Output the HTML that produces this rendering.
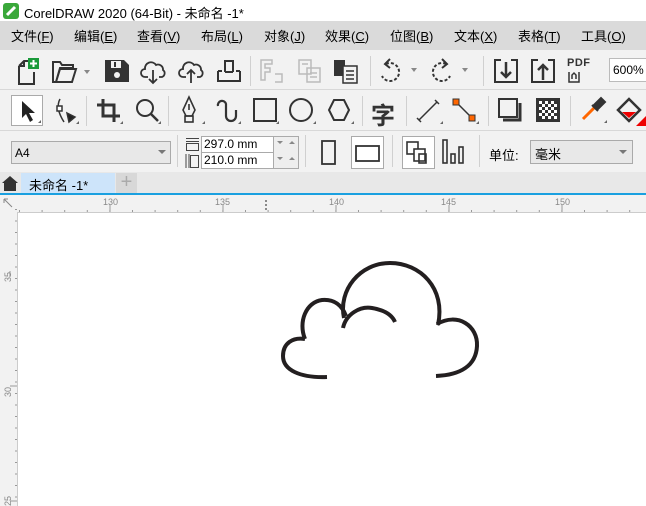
<!DOCTYPE html>
<html><head><meta charset="utf-8"><style>
*{margin:0;padding:0;box-sizing:border-box}
body{width:646px;height:506px;overflow:hidden;background:#fff;font-family:"Liberation Sans","Noto Sans CJK SC",sans-serif;position:relative}
.abs{position:absolute}
.t{font-size:13px;color:#000}
.menu span{position:absolute;top:5px;font-size:13px}
.bar{position:absolute;left:0;width:646px;background:#f2f2f2}
svg{position:absolute;overflow:visible}
.sep{position:absolute;width:1px;background:#d0d0d0}
</style></head><body>
<!-- title -->
<div class="abs" style="left:0;top:0;width:646px;height:21px;background:#fff"></div>
<svg style="left:3px;top:3px" width="16" height="16"><rect x="0" y="0" width="16" height="16" rx="3" fill="#3aa83a"/><path d="M4 12 L12 4" stroke="#fff" stroke-width="3"/></svg>
<div class="abs t" style="left:24px;top:3px;font-size:13px">CorelDRAW 2020 (64-Bit) - 未命名 -1*</div>
<!-- menu -->
<div class="abs menu" style="left:0;top:21px;width:646px;height:29px;background:#dadada">
<span style="left:11px">文件(<u>F</u>)</span><span style="left:74px">编辑(<u>E</u>)</span><span style="left:137px">查看(<u>V</u>)</span><span style="left:201px">布局(<u>L</u>)</span><span style="left:264px">对象(<u>J</u>)</span><span style="left:325px">效果(<u>C</u>)</span><span style="left:390px">位图(<u>B</u>)</span><span style="left:454px">文本(<u>X</u>)</span><span style="left:518px">表格(<u>T</u>)</span><span style="left:581px">工具(<u>O</u>)</span>
</div>
<div class="bar" style="top:50px;height:122px"></div>
<div class="abs" style="left:0;top:89px;width:646px;height:1px;background:#d8d8d8"></div>
<div class="abs" style="left:0;top:130px;width:646px;height:1px;background:#d8d8d8"></div>
<!-- toolbar1 icons -->
<svg style="left:14px;top:58px" width="30" height="28" fill="none" stroke="#333" stroke-width="2"><path d="M5 8 L10 3 H16 M5 8 V26 H20 V14 M5 8 H10 V3"/><rect x="14" y="0" width="11" height="11" fill="#1a9a3a" stroke="none"/><path d="M19.5 2 V9 M16 5.5 H23" stroke="#fff"/></svg>
<svg style="left:52px;top:60px" width="40" height="24"><path d="M1 2 H8 L10 5 H21 V8 H8 L4 22 H1 Z M4 22 L8 9 H24 L20 22 Z" fill="none" stroke="#333" stroke-width="2"/><path d="M32 10 L38 10 L35 14 Z" fill="#888"/></svg>
<svg style="left:104px;top:59px" width="26" height="24"><path d="M1 1 H20 L25 6 V23 H1 Z" fill="#333"/><rect x="7" y="2" width="10" height="7" fill="#f2f2f2"/><rect x="10" y="3" width="2" height="5" fill="#333"/><circle cx="13" cy="16" r="3" fill="#f2f2f2"/></svg>
<svg style="left:141px;top:59px" width="26" height="26" fill="none" stroke="#333" stroke-width="1.8"><path d="M7 18 H4 A4 4 0 0 1 4 10 A6 6 0 0 1 15 6 A5 5 0 0 1 22 11 A4 4 0 0 1 21 18 H18"/><path d="M12 11 V24 M8 20 L12 24 L16 20"/></svg>
<svg style="left:179px;top:59px" width="26" height="26" fill="none" stroke="#333" stroke-width="1.8"><path d="M7 18 H4 A4 4 0 0 1 4 10 A6 6 0 0 1 15 6 A5 5 0 0 1 22 11 A4 4 0 0 1 21 18 H18"/><path d="M12 24 V11 M8 15 L12 11 L16 15"/></svg>
<svg style="left:216px;top:58px" width="26" height="26" fill="none" stroke="#333" stroke-width="2"><path d="M9 14 V3 H17 V14 M2 13 V23 H24 V13 M9 14 H17 M2 13 H6 M20 13 H24"/></svg>
<div class="sep" style="left:250px;top:56px;height:30px"></div>
<svg style="left:260px;top:58px" width="26" height="26" fill="none" stroke="#bbb" stroke-width="1.5"><path d="M1 2 H12 V6 H5 V10 H10 V14 H5 V22 H1 Z"/><path d="M15 16 H22 V24 H15"/></svg>
<svg style="left:298px;top:58px" width="26" height="26" fill="none" stroke="#bbb" stroke-width="1.5"><rect x="1" y="2" width="12" height="14"/><rect x="9" y="10" width="13" height="14"/><path d="M4 6 H10 M12 15 H19 M12 19 H19"/></svg>
<svg style="left:333px;top:58px" width="28" height="26"><rect x="1" y="2" width="11" height="16" fill="#333"/><rect x="10" y="8" width="14" height="17" fill="#f2f2f2" stroke="#333" stroke-width="1.5"/><path d="M13 13 H21 M13 17 H21 M13 21 H21" stroke="#333" stroke-width="1.5"/></svg>
<div class="sep" style="left:370px;top:56px;height:30px"></div>
<svg style="left:378px;top:58px" width="40" height="26" fill="none" stroke="#333" stroke-width="2"><path d="M8 6 A9 9 0 1 1 4 18" stroke-dasharray="3 2"/><path d="M12 1 L7 6 L12 10"/><path d="M33 10 L39 10 L36 14 Z" fill="#888" stroke="none"/></svg>
<svg style="left:430px;top:58px" width="40" height="26" fill="none" stroke="#333" stroke-width="2"><path d="M16 6 A9 9 0 1 0 20 18" stroke-dasharray="3 2"/><path d="M12 1 L17 6 L12 10"/><path d="M32 10 L38 10 L35 14 Z" fill="#888" stroke="none"/></svg>
<div class="sep" style="left:483px;top:56px;height:30px"></div>
<svg style="left:494px;top:59px" width="24" height="24" fill="none" stroke="#333" stroke-width="2"><path d="M7 1 H1 V23 H23 V1 H17"/><path d="M12 3 V18 M7 13 L12 18 L17 13" stroke-width="2.5"/></svg>
<svg style="left:531px;top:59px" width="24" height="24" fill="none" stroke="#333" stroke-width="2"><path d="M7 1 H1 V23 H23 V1 H17"/><path d="M12 21 V6 M7 11 L12 6 L17 11" stroke-width="2.5"/></svg>
<div class="abs" style="left:567px;top:57px;font-size:11px;color:#333;font-weight:bold;letter-spacing:0.5px">PDF</div>
<svg style="left:568px;top:71px" width="12" height="12" fill="none" stroke="#333" stroke-width="1.5"><path d="M1 1 V11 H11 V1 M4 8 V4 L6 2 L8 4 V8"/></svg>
<div class="abs" style="left:609px;top:58px;width:40px;height:24px;background:#fff;border:1px solid #bbb;font-size:12px;padding:4px 0 0 3px">600%</div>
<!-- toolbar2 -->
<div class="abs" style="left:11px;top:95px;width:32px;height:31px;background:#fff;border:1px solid #aaa"></div>
<svg style="left:18px;top:100px" width="24" height="24"><path d="M4 1 L4 18 L8 14 L12 22 L15 20 L11 13 L17 13 Z" fill="#222"/><path d="M23 20 V23 H20 Z" fill="#666"/></svg>
<svg style="left:52px;top:98px" width="28" height="28" fill="none" stroke="#333" stroke-width="1.5"><path d="M8 1 Q3 10 12 24"/><rect x="5" y="8" width="5" height="5" fill="#fff"/><path d="M15 15 L23 19 L17 24 Z" fill="#222"/><path d="M27 23 V26 H24 Z" fill="#666" stroke="none"/></svg>
<div class="sep" style="left:86px;top:96px;height:30px"></div>
<svg style="left:96px;top:98px" width="28" height="28" fill="none" stroke="#333" stroke-width="3"><path d="M7 1 V18 H24 M1 7 H18 V24"/><path d="M27 23 V26 H24 Z" fill="#666" stroke="none"/></svg>
<svg style="left:134px;top:98px" width="28" height="28" fill="none" stroke="#333" stroke-width="2"><circle cx="11" cy="10" r="8"/><path d="M17 16 L24 23" stroke-width="2.5"/><path d="M27 23 V26 H24 Z" fill="#666" stroke="none"/></svg>
<div class="sep" style="left:168px;top:96px;height:30px"></div>
<svg style="left:178px;top:96px" width="28" height="30" fill="none" stroke="#333" stroke-width="1.6"><path d="M11 1 L5 14 L8 20 H14 L17 14 Z M11 8 V14"/><rect x="7" y="20" width="8" height="6"/><path d="M27 25 V28 H24 Z" fill="#666" stroke="none"/></svg>
<svg style="left:214px;top:96px" width="28" height="30" fill="none" stroke="#333" stroke-width="2.2"><path d="M4 10 A4 4 0 0 1 12 8 V20 A5 5 0 0 0 22 20 V14"/><path d="M27 25 V28 H24 Z" fill="#666" stroke="none"/></svg>
<svg style="left:252px;top:98px" width="28" height="28" fill="none" stroke="#333" stroke-width="2"><rect x="2" y="1" width="22" height="22"/><path d="M27 23 V26 H24 Z" fill="#666" stroke="none"/></svg>
<svg style="left:289px;top:98px" width="28" height="28" fill="none" stroke="#333" stroke-width="2"><circle cx="12" cy="12" r="11"/><path d="M27 23 V26 H24 Z" fill="#666" stroke="none"/></svg>
<svg style="left:327px;top:98px" width="28" height="28" fill="none" stroke="#333" stroke-width="2"><path d="M7 2 H17 L22 12 L17 22 H7 L2 12 Z"/><path d="M27 23 V26 H24 Z" fill="#666" stroke="none"/></svg>
<div class="sep" style="left:362px;top:96px;height:30px"></div>
<div class="abs" style="left:371px;top:96px;font-size:24px;font-weight:bold;color:#333">字</div>
<div class="sep" style="left:406px;top:96px;height:30px"></div>
<svg style="left:416px;top:98px" width="28" height="28" fill="none" stroke="#333" stroke-width="1.5"><path d="M3 22 L21 4 M1 20 L5 24 M19 2 L23 6"/><path d="M27 23 V26 H24 Z" fill="#666" stroke="none"/></svg>
<svg style="left:452px;top:98px" width="28" height="28"><path d="M4 4 L20 20" stroke="#333" stroke-width="1.5"/><rect x="1" y="1" width="6" height="6" fill="#f60" stroke="#333"/><rect x="17" y="17" width="6" height="6" fill="#f60" stroke="#333"/><path d="M27 23 V26 H24 Z" fill="#666"/></svg>
<div class="sep" style="left:488px;top:96px;height:30px"></div>
<svg style="left:498px;top:98px" width="28" height="28" fill="none" stroke="#333" stroke-width="2"><rect x="1" y="1" width="18" height="18"/><path d="M22 5 V22 H5" stroke-width="3"/></svg>
<svg style="left:536px;top:98px" width="24" height="24"><rect x="0" y="0" width="24" height="24" fill="#333"/><g fill="#fff"><rect x="3" y="3" width="3" height="3"/><rect x="9" y="3" width="3" height="3"/><rect x="15" y="3" width="3" height="3"/><rect x="6" y="6" width="3" height="3"/><rect x="12" y="6" width="3" height="3"/><rect x="18" y="6" width="3" height="3"/><rect x="3" y="9" width="3" height="3"/><rect x="9" y="9" width="3" height="3"/><rect x="15" y="9" width="3" height="3"/><rect x="6" y="12" width="3" height="3"/><rect x="12" y="12" width="3" height="3"/><rect x="18" y="12" width="3" height="3"/><rect x="3" y="15" width="3" height="3"/><rect x="9" y="15" width="3" height="3"/><rect x="15" y="15" width="3" height="3"/><rect x="6" y="18" width="3" height="3"/><rect x="12" y="18" width="3" height="3"/><rect x="18" y="18" width="3" height="3"/></g></svg>
<div class="sep" style="left:570px;top:96px;height:30px"></div>
<svg style="left:580px;top:97px" width="28" height="28"><path d="M3 22 L15 10" stroke="#f60" stroke-width="3"/><path d="M14 8 L21 1 L25 5 L18 12 Z M12 8 L18 14" stroke="#333" stroke-width="2" fill="#333"/><path d="M27 23 V26 H24 Z" fill="#666"/></svg>
<svg style="left:616px;top:96px" width="30" height="30"><path d="M2 14 L13 3 L24 14 L13 25 Z" fill="none" stroke="#333" stroke-width="2.5"/><path d="M6 16 L13 22 L20 16 Z" fill="#e00"/><path d="M30 20 V30 H20 Z" fill="#e00"/></svg>
<!-- property bar -->
<div class="abs" style="left:11px;top:141px;width:160px;height:23px;background:#e8e8e8;border:1px solid #aaa;font-size:12px;padding:4px 0 0 3px">A4</div>
<svg style="left:158px;top:150px" width="8" height="5"><path d="M0 0 H8 L4 4 Z" fill="#777"/></svg>
<div class="sep" style="left:177px;top:135px;height:32px"></div>
<svg style="left:185px;top:137px" width="16" height="32" fill="none" stroke="#444" stroke-width="1"><path d="M1 1.5 H14 M1 4.5 H14"/><rect x="1.5" y="6.5" width="12" height="7"/><path d="M1 17 V31 M4 17 V31"/><rect x="5.5" y="18.5" width="8" height="12"/></svg>
<div class="abs" style="left:201px;top:136px;width:98px;height:33px;border:1px solid #aaa;background:#fff"></div>
<div class="abs" style="left:201px;top:152px;width:98px;height:1px;background:#aaa"></div>
<div class="abs" style="left:273px;top:136px;width:1px;height:33px;background:#aaa"></div>
<div class="abs" style="left:274px;top:137px;width:24px;height:31px;background:#eee"></div>
<div class="abs" style="left:204px;top:137px;font-size:12px">297.0 mm</div>
<div class="abs" style="left:204px;top:153px;font-size:12px">210.0 mm</div>
<svg style="left:277px;top:141px" width="20" height="24" fill="#888"><path d="M0 0 H6 L3 3 Z M12 3 H18 L15 0 Z M0 16 H6 L3 19 Z M12 19 H18 L15 16 Z"/></svg>
<div class="sep" style="left:305px;top:135px;height:32px"></div>
<svg style="left:321px;top:140px" width="16" height="26" fill="none" stroke="#333" stroke-width="1.8"><rect x="1" y="1" width="13" height="23"/></svg>
<div class="abs" style="left:351px;top:136px;width:33px;height:33px;background:#fff;border:1px solid #aaa"></div>
<svg style="left:355px;top:145px" width="26" height="18" fill="none" stroke="#333" stroke-width="1.8"><rect x="1" y="1" width="23" height="15"/></svg>
<div class="sep" style="left:392px;top:135px;height:32px"></div>
<div class="abs" style="left:402px;top:136px;width:33px;height:33px;background:#fff;border:1px solid #aaa"></div>
<svg style="left:406px;top:141px" width="26" height="26" fill="#fff" stroke="#333" stroke-width="1.6"><rect x="1" y="1" width="11" height="12"/><rect x="8" y="8" width="11" height="12"/><rect x="13" y="13" width="7" height="9" fill="none"/></svg>
<svg style="left:442px;top:139px" width="26" height="26" fill="none" stroke="#333" stroke-width="1.6"><rect x="1" y="1" width="4" height="23"/><rect x="9" y="15" width="4" height="9"/><rect x="17" y="8" width="4" height="16"/></svg>
<div class="sep" style="left:479px;top:135px;height:32px"></div>
<div class="abs" style="left:489px;top:145px;font-size:13px">单位:</div>
<div class="abs" style="left:530px;top:140px;width:103px;height:24px;background:#e8e8e8;border:1px solid #aaa;font-size:13px;padding:3px 0 0 4px">毫米</div>
<svg style="left:619px;top:150px" width="8" height="5"><path d="M0 0 H8 L4 4 Z" fill="#777"/></svg>
<!-- tab bar -->
<div class="abs" style="left:0;top:172px;width:646px;height:21px;background:#e8e8e8"></div>
<svg style="left:1px;top:175px" width="18" height="16"><path d="M1 8 L9 1 L17 8 H15 V16 H3 V8 Z" fill="#333"/></svg>
<div class="abs" style="left:21px;top:173px;width:94px;height:20px;background:#cde4fa;font-size:13px;padding:2px 0 0 8px">未命名 -1*</div>
<div class="abs" style="left:116px;top:173px;width:21px;height:20px;background:#d8d8d8;color:#aaa;font-size:20px;line-height:18px;text-align:center">+</div>
<div class="abs" style="left:0;top:193px;width:646px;height:2px;background:#1aa0e0"></div>
<!-- rulers -->
<div class="abs" style="left:0;top:195px;width:646px;height:18px;background:#f2f2f2"></div>
<div class="abs" style="left:0;top:195px;width:17px;height:311px;background:#f2f2f2"></div>
<div class="abs" style="left:17px;top:212px;width:629px;height:1px;background:#ccc"></div>
<div class="abs" style="left:17px;top:212px;width:1px;height:294px;background:#ccc"></div>
<svg style="left:0;top:195px" width="646" height="311">
<g stroke="#999" stroke-width="1">
<path d="M4 4 L12 12 M4 4 H8 M4 4 V8" stroke="#888"/>
<path d="M110 10 V17 M223 10 V17 M336 10 V17 M449 10 V17 M562 10 V17"/>
<path d="M10 76 V82 M10 191 H17 M10 306 H17" />
</g>
<g fill="#999">
<script></script>
</g>
<path d="M266 5 V17" stroke="#222" stroke-dasharray="2 2"/>
<g font-family="Liberation Sans" font-size="9" fill="#888">
<text x="103" y="10">130</text><text x="215" y="10">135</text><text x="329" y="10">140</text><text x="441" y="10">145</text><text x="555" y="10">150</text>
<text transform="translate(11,87) rotate(-90)">35</text>
<text transform="translate(11,202) rotate(-90)">30</text>
<text transform="translate(11,311) rotate(-90)">25</text>
</g>
<g stroke="#999" stroke-dasharray="1 21.6" stroke-width="2">
<path d="M19 16 H646" />
<path d="M16 14 V311" stroke-dasharray="1 10.5"/>
</g>
</svg>
<!-- cloud -->
<svg style="left:0;top:0" width="646" height="506" fill="none" stroke="#231f20" stroke-width="4">
<path d="M327 377 C300 378 283 370 283 356 C283 343 293 337 305 339"/>
<path d="M305 339 C298 322 306 302 322 300 C334 299 342 305 346 316"/>
<path d="M344 318 C338 290 360 263 390 263 C420 263 446 288 438 325"/>
<path d="M437 324 C458 312 478 326 477 346 C476 366 460 375 436 376"/>
<path d="M343 328 C346 314 360 306 372 308 C384 310 392 315 395 322"/>
</svg>
</body></html>
